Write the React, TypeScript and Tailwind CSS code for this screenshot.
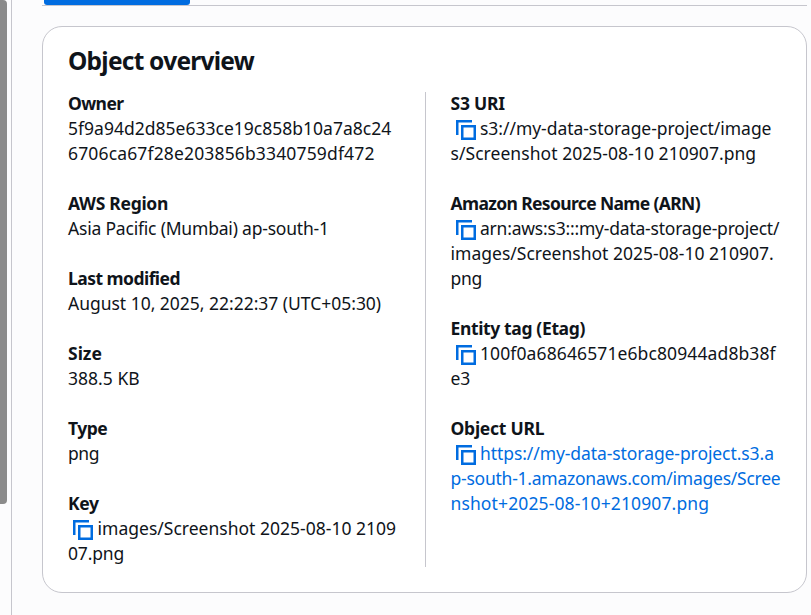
import type { ReactNode } from "react";

function CopyIcon() {
  return (
    <svg
      className="ml-[5px] mr-[4.5px] h-5 w-5 shrink-0 translate-y-[4px] fill-none stroke-[#006ce0]"
      viewBox="0 0 20 20"
      strokeWidth="2.5"
    >
      <path d="M1.25 15V1.25H16" />
      <path d="M6.25 6.25H18.75V18.75H6.25Z" />
    </svg>
  );
}

function Field({ label, children }: { label: ReactNode; children: ReactNode }) {
  return (
    <div className="flex -translate-y-px flex-col whitespace-nowrap">
      <div className="font-bold">{label}</div>
      {children}
    </div>
  );
}

function CopyLine({ children }: { children: ReactNode }) {
  return (
    <div className="flex h-[25px] items-start">
      <CopyIcon />
      {children}
    </div>
  );
}

export default function App() {
  return (
    <div className="flex h-[615px] w-[811px] overflow-hidden bg-[#fcfcfd] font-['Noto_Sans','Open_Sans',sans-serif] text-[17.5px] leading-[25px] text-[#0f141a]">
      <div className="h-[504px] w-[7px] shrink-0 rounded-r-[4px] bg-[#8b8b8b]" />
      <div className="ml-1 w-px shrink-0 bg-[#c6c6cd]" />
      <main className="ml-[30px] w-[765px] shrink-0">
        <div className="h-1.5 border-b border-[#c6c6cd] pl-0.5">
          <div className="h-[5px] w-[146px] rounded-b-[3px] bg-[#006ce0]" />
        </div>
        <section className="mt-5 h-[567px] rounded-[20px] border border-[#c6c6cd] bg-white pl-[25px] pt-[18px]">
          <h2 className="h-[47px] text-[24.5px] font-bold leading-[31px] tracking-[-0.76px]">Object overview</h2>
          <div className="flex">
            <div className="flex h-[475px] w-[358px] flex-col gap-[25px] border-r border-[#c6c6cd]">
              <Field label={<span className="tracking-[-0.6px]">Owner</span>}>
                <div className="tracking-[0.01px]">5f9a94d2d85e633ce19c858b10a7a8c24</div>
                <div className="tracking-[0.15px]">6706ca67f28e203856b3340759df472</div>
              </Field>
              <Field label={<span className="tracking-[-0.3px]">AWS Region</span>}>
                <div className="tracking-[-0.2px]">Asia Pacific (Mumbai) ap-south-1</div>
              </Field>
              <Field label={<span className="tracking-[-0.54px]">Last modified</span>}>
                <div className="tracking-[-0.02px]">August 10, 2025, 22:22:37 (UTC+05:30)</div>
              </Field>
              <Field label="Size">
                <div className="tracking-[0.03px]">388.5 KB</div>
              </Field>
              <Field label={<span className="tracking-[-0.5px]">Type</span>}>
                <div className="tracking-[-0.4px]">png</div>
              </Field>
              <Field label={<span className="tracking-[-0.4px]">Key</span>}>
                <CopyLine>
                  <span className="tracking-[0.01px]">images/Screenshot 2025-08-10 2109</span>
                </CopyLine>
                <div className="tracking-[-0.15px]">07.png</div>
              </Field>
            </div>
            <div className="flex flex-col gap-[25px] pl-[24.5px]">
              <Field label={<span className="tracking-[-0.25px]">S3 URI</span>}>
                <CopyLine>
                  <span className="tracking-[-0.04px]">s3://my-data-storage-project/image</span>
                </CopyLine>
                <div className="tracking-[0.05px]">s/Screenshot 2025-08-10 210907.png</div>
              </Field>
              <Field label={<span className="tracking-[-0.64px]">Amazon Resource Name (ARN)</span>}>
                <CopyLine>
                  <span className="tracking-[-0.21px]">arn:aws:s3:::my-data-storage-project/</span>
                </CopyLine>
                <div className="tracking-[0.01px]">images/Screenshot 2025-08-10 210907.</div>
                <div className="tracking-[-0.3px]">png</div>
              </Field>
              <Field label={<span className="tracking-[-0.36px]">Entity tag (Etag)</span>}>
                <CopyLine>
                  <span className="tracking-[0.11px]">100f0a68646571e6bc80944ad8b38f</span>
                </CopyLine>
                <div>e3</div>
              </Field>
              <Field label={<span className="tracking-[-0.25px]">Object URL</span>}>
                <a className="text-[#006ce0]">
                  <CopyLine>
                    <span className="tracking-[-0.08px]">https://my-data-storage-project.s3.a</span>
                  </CopyLine>
                  <div className="tracking-[-0.24px]">p-south-1.amazonaws.com/images/Scree</div>
                  <div className="tracking-[0.12px]">nshot+2025-08-10+210907.png</div>
                </a>
              </Field>
            </div>
          </div>
        </section>
      </main>
    </div>
  );
}
